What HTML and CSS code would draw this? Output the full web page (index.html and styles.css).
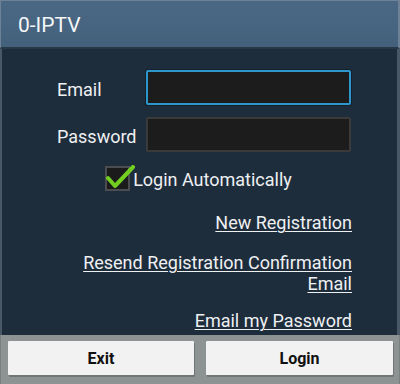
FILE: index.html
```html
<!DOCTYPE html>
<html>
<head>
<meta charset="utf-8">
<link rel="stylesheet" href="styles.css">
</head>
<body>
<div class="dialog">
  <div class="titlebar">0-IPTV</div>
  <div class="content">
    <div class="form">
      <label class="label">Email</label>
      <div class="input focused"></div>
      <label class="label">Password</label>
      <div class="input"></div>
    </div>
    <div class="check-row">
      <span class="checkbox">
        <svg class="tick" width="30" height="26" viewBox="0 0 30 26"><path d="M2 13 L9 21 L27 2" fill="none" stroke="#72cf22" stroke-width="4" stroke-linecap="round" stroke-linejoin="round"/></svg>
      </span>
      <span class="check-label">Login Automatically</span>
    </div>
    <div class="links">
      <a class="link first">New Registration</a>
      <a class="link second">Resend Registration Confirmation<br>Email</a>
      <a class="link third">Email my Password</a>
    </div>
  </div>
  <div class="footer">
    <button class="btn">Exit</button>
    <button class="btn">Login</button>
  </div>
</div>
</body>
</html>
```
FILE: styles.css
```css
html, body {
  margin: 0;
  padding: 0;
  background: #1e2d3c;
}
.dialog {
  width: 400px;
  height: 384px;
  display: flex;
  flex-direction: column;
  font-family: Roboto, "Liberation Sans", sans-serif;
  background: #1e2d3c;
  box-sizing: border-box;
  box-shadow: inset 2px 0 0 #4a5866, inset -3px 0 0 #4a5866;
  overflow: hidden;
}
.titlebar {
  height: 49px;
  flex: none;
  box-sizing: border-box;
  padding-left: 17px;
  padding-top: 2px;
  display: flex;
  align-items: center;
  font-size: 21px;
  color: #f4f6f8;
  background: linear-gradient(#4a6884, #44617c);
  border-top: 1px solid #6d8296;
  border-left: 1px solid #6d8296;
  border-right: 2px solid #6d8296;
  border-bottom: 2px solid #283846;
}
.content {
  flex: 1;
  padding-top: 21px;
  color: #eef0f2;
  font-size: 18px;
}
.form {
  display: grid;
  grid-template-columns: 89px 205px;
  grid-auto-rows: 35px;
  row-gap: 12px;
  padding-left: 57px;
  align-items: center;
}
.label {
  padding-top: 3px;
}
.input {
  height: 35px;
  box-sizing: border-box;
  background: #1c1c1c;
  border: 2px solid #3a3a3a;
  border-radius: 2px;
}
.input.focused {
  border: 2px solid #2d97cc;
  box-shadow: 0 0 0 1px #14202c;
}
.check-row {
  display: flex;
  align-items: center;
  justify-content: center;
  margin-top: 14px;
  padding-right: 3px;
  height: 25px;
}
.checkbox {
  position: relative;
  width: 25px;
  height: 25px;
  box-sizing: border-box;
  background: #1b1b1b;
  border: 2px solid #4b4d50;
  margin-right: 3px;
}
.tick {
  position: absolute;
  left: -1px;
  top: -3px;
}
.check-label {
  padding-top: 2px;
}
.links {
  display: flex;
  flex-direction: column;
  align-items: flex-end;
  text-align: right;
  padding-right: 48px;
  line-height: 21px;
}
.link {
  color: #eef0f2;
  text-decoration: underline;
  text-underline-offset: 2px;
  text-decoration-thickness: 1px;
}
.first { margin-top: 21px; }
.second { margin-top: 19px; }
.third { margin-top: 16px; }
.footer {
  height: 49px;
  flex: none;
  box-sizing: border-box;
  background: #8d9292;
  padding: 6px 8px 9px 7px;
  display: grid;
  grid-template-columns: 186px 187px;
  column-gap: 12px;
  border-left: 1px solid #7a8080;
  border-right: 1px solid #7a8080;
}
.btn {
  height: 34px;
  border: none;
  border-radius: 1px;
  background: #f2f2f2;
  box-shadow: 1px 2px 0 #707575;
  font-family: Roboto, "Liberation Sans", sans-serif;
  font-weight: bold;
  font-size: 16px;
  color: #111;
  padding: 0;
}
```
